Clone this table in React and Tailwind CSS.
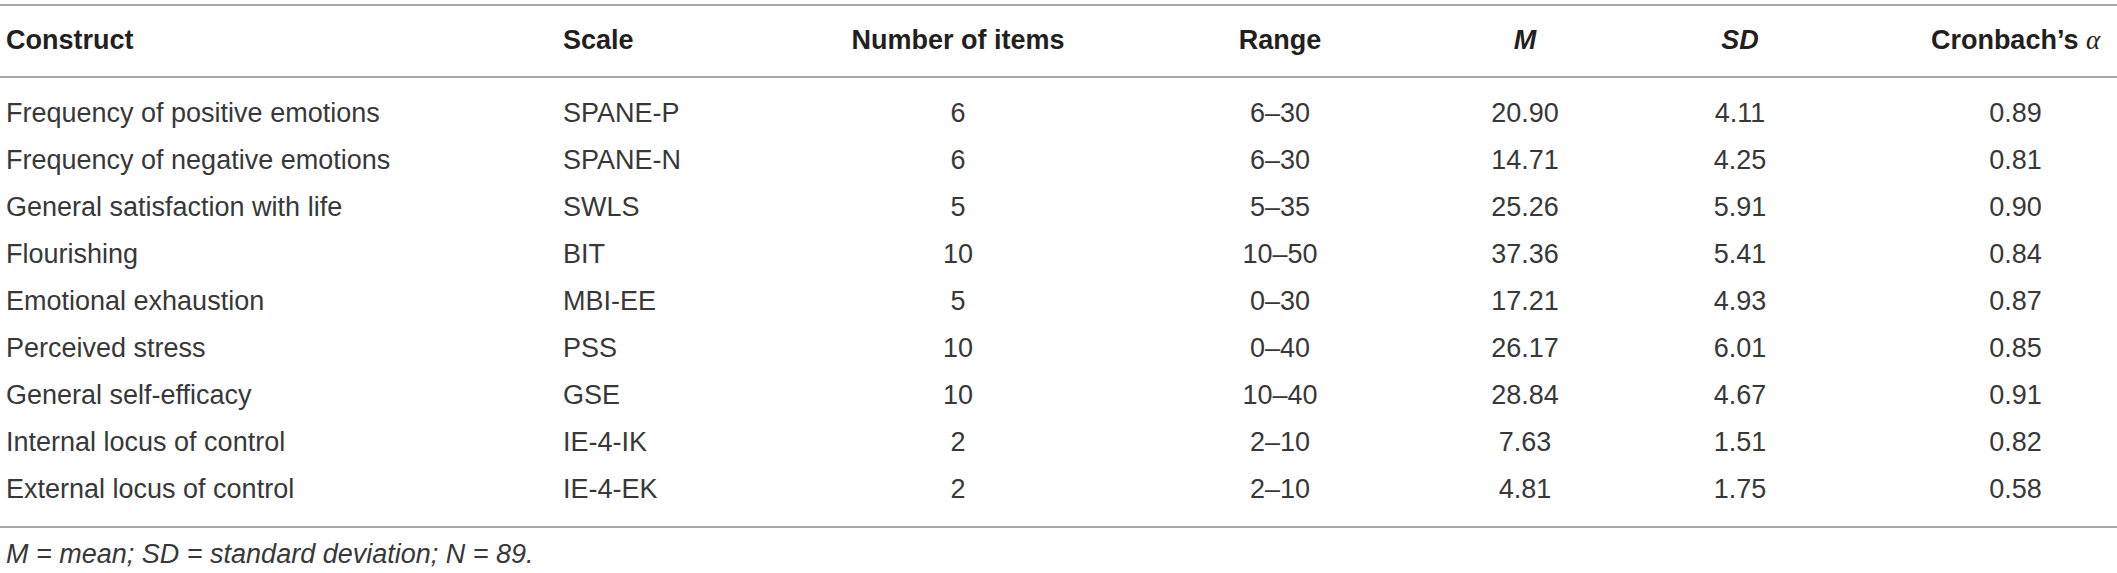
import React from 'react';

const COLS = 'grid grid-cols-[563px_237px_316px_328px_162px_268px_243px] items-center';

const rows = [
  ['Frequency of positive emotions', 'SPANE-P', '6', '6–30', '20.90', '4.11', '0.89'],
  ['Frequency of negative emotions', 'SPANE-N', '6', '6–30', '14.71', '4.25', '0.81'],
  ['General satisfaction with life', 'SWLS', '5', '5–35', '25.26', '5.91', '0.90'],
  ['Flourishing', 'BIT', '10', '10–50', '37.36', '5.41', '0.84'],
  ['Emotional exhaustion', 'MBI-EE', '5', '0–30', '17.21', '4.93', '0.87'],
  ['Perceived stress', 'PSS', '10', '0–40', '26.17', '6.01', '0.85'],
  ['General self-efficacy', 'GSE', '10', '10–40', '28.84', '4.67', '0.91'],
  ['Internal locus of control', 'IE-4-IK', '2', '2–10', '7.63', '1.51', '0.82'],
  ['External locus of control', 'IE-4-EK', '2', '2–10', '4.81', '1.75', '0.58'],
];

export default function App() {
  return (
    <div className="w-[2117px] h-[573px] bg-white pt-1 font-['Liberation_Sans',Arial,sans-serif] text-[27px] leading-[1.15] overflow-hidden">
      {/* Шапка таблицы */}
      <div className={`${COLS} h-[74px] border-t-2 border-b-2 border-[#a6a6a6] font-bold text-[#231f20]`}>
        <div className="pl-[6px]">Construct</div>
        <div>Scale</div>
        <div className="text-center">Number of items</div>
        <div className="text-center">Range</div>
        <div className="text-center italic">M</div>
        <div className="text-center italic">SD</div>
        <div className="text-center pl-10">
          Cronbach’s <span className="font-['Liberation_Serif',serif] font-normal italic">α</span>
        </div>
      </div>

      {/* Строки */}
      <div className="pt-3 pb-[13px] border-b-2 border-[#a6a6a6] text-[#383838]">
        {rows.map((r) => (
          <div key={r[0]} className={`${COLS} h-[47px]`}>
            <div className="pl-[6px]">{r[0]}</div>
            <div>{r[1]}</div>
            <div className="text-center">{r[2]}</div>
            <div className="text-center">{r[3]}</div>
            <div className="text-center">{r[4]}</div>
            <div className="text-center">{r[5]}</div>
            <div className="text-center pl-10">{r[6]}</div>
          </div>
        ))}
      </div>

      {/* Примечание */}
      <div className="pt-[11px] pl-[6px] italic text-[#383838]">
        M = mean; SD = standard deviation; N = 89.
      </div>
    </div>
  );
}
